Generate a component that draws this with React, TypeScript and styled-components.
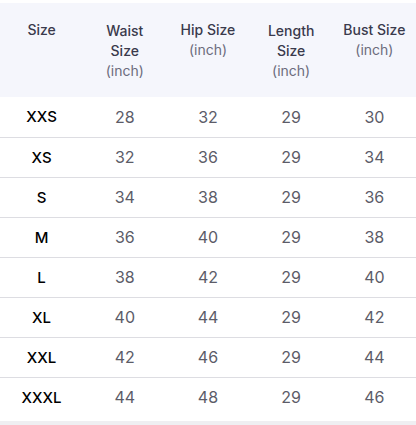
import styled, { createGlobalStyle } from "styled-components"

const GlobalStyle = createGlobalStyle`
  body {
    margin: 0;
    background: #ffffff;
    font-family: Inter, "Noto Sans", sans-serif;
  }
`

const columns = [
  { title: "Size", unit: "" },
  { title: "Waist Size", unit: "(inch)" },
  { title: "Hip Size", unit: "(inch)" },
  { title: "Length Size", unit: "(inch)" },
  { title: "Bust Size", unit: "(inch)" },
]

const rows: [string, number, number, number, number][] = [
  ["XXS", 28, 32, 29, 30],
  ["XS", 32, 36, 29, 34],
  ["S", 34, 38, 29, 36],
  ["M", 36, 40, 29, 38],
  ["L", 38, 42, 29, 40],
  ["XL", 40, 44, 29, 42],
  ["XXL", 42, 46, 29, 44],
  ["XXXL", 44, 48, 29, 46],
]

export default function App() {
  return (
    <Page>
      <GlobalStyle />
      <Table>
        <thead>
          <HeadRow>
            {columns.map((col) => (
              <HeadCell key={col.title} $narrow={col.title === "Waist Size" || col.title === "Length Size"}>
                {col.title}
                {col.unit && <Unit>{col.unit}</Unit>}
              </HeadCell>
            ))}
          </HeadRow>
        </thead>
        <tbody>
          {rows.map(([size, ...values]) => (
            <BodyRow key={size}>
              <SizeCell>{size}</SizeCell>
              {values.map((v, i) => (
                <ValueCell key={i}>{v}</ValueCell>
              ))}
            </BodyRow>
          ))}
        </tbody>
      </Table>
      <BottomBar />
    </Page>
  )
}

const Page = styled.div`
  width: 416px;
  height: 425px;
  padding-top: 3px;
  box-sizing: border-box;
  display: flex;
  flex-direction: column;
  overflow: hidden;
`

const Table = styled.table`
  width: 100%;
  border-collapse: collapse;
  table-layout: fixed;
`

const HeadRow = styled.tr`
  background: #f5f6fc;
  height: 94px;
`

const HeadCell = styled.th<{ $narrow?: boolean }>`
  vertical-align: top;
  text-align: center;
  padding: ${(p) => (p.$narrow ? "18px 18px 0" : "17px 4px 0")};
  font-size: 14px;
  line-height: 20px;
  font-weight: 500;
  color: #3a3a4c;
`

const Unit = styled.span`
  display: block;
  font-weight: 400;
  color: #6c6c7c;
`

const BodyRow = styled.tr`
  height: 40px;
  border-bottom: 1px solid #dddde2;

  &:last-child {
    border-bottom: 0;
  }
`

const SizeCell = styled.td`
  text-align: center;
  font-size: 15px;
  font-weight: 500;
  color: #000000;
  padding: 0;
`

const ValueCell = styled.td`
  text-align: center;
  font-size: 16px;
  font-weight: 400;
  color: #5c5c68;
  padding: 0;
`

const BottomBar = styled.div`
  margin-top: auto;
  height: 4px;
  background: #efeff2;
`
